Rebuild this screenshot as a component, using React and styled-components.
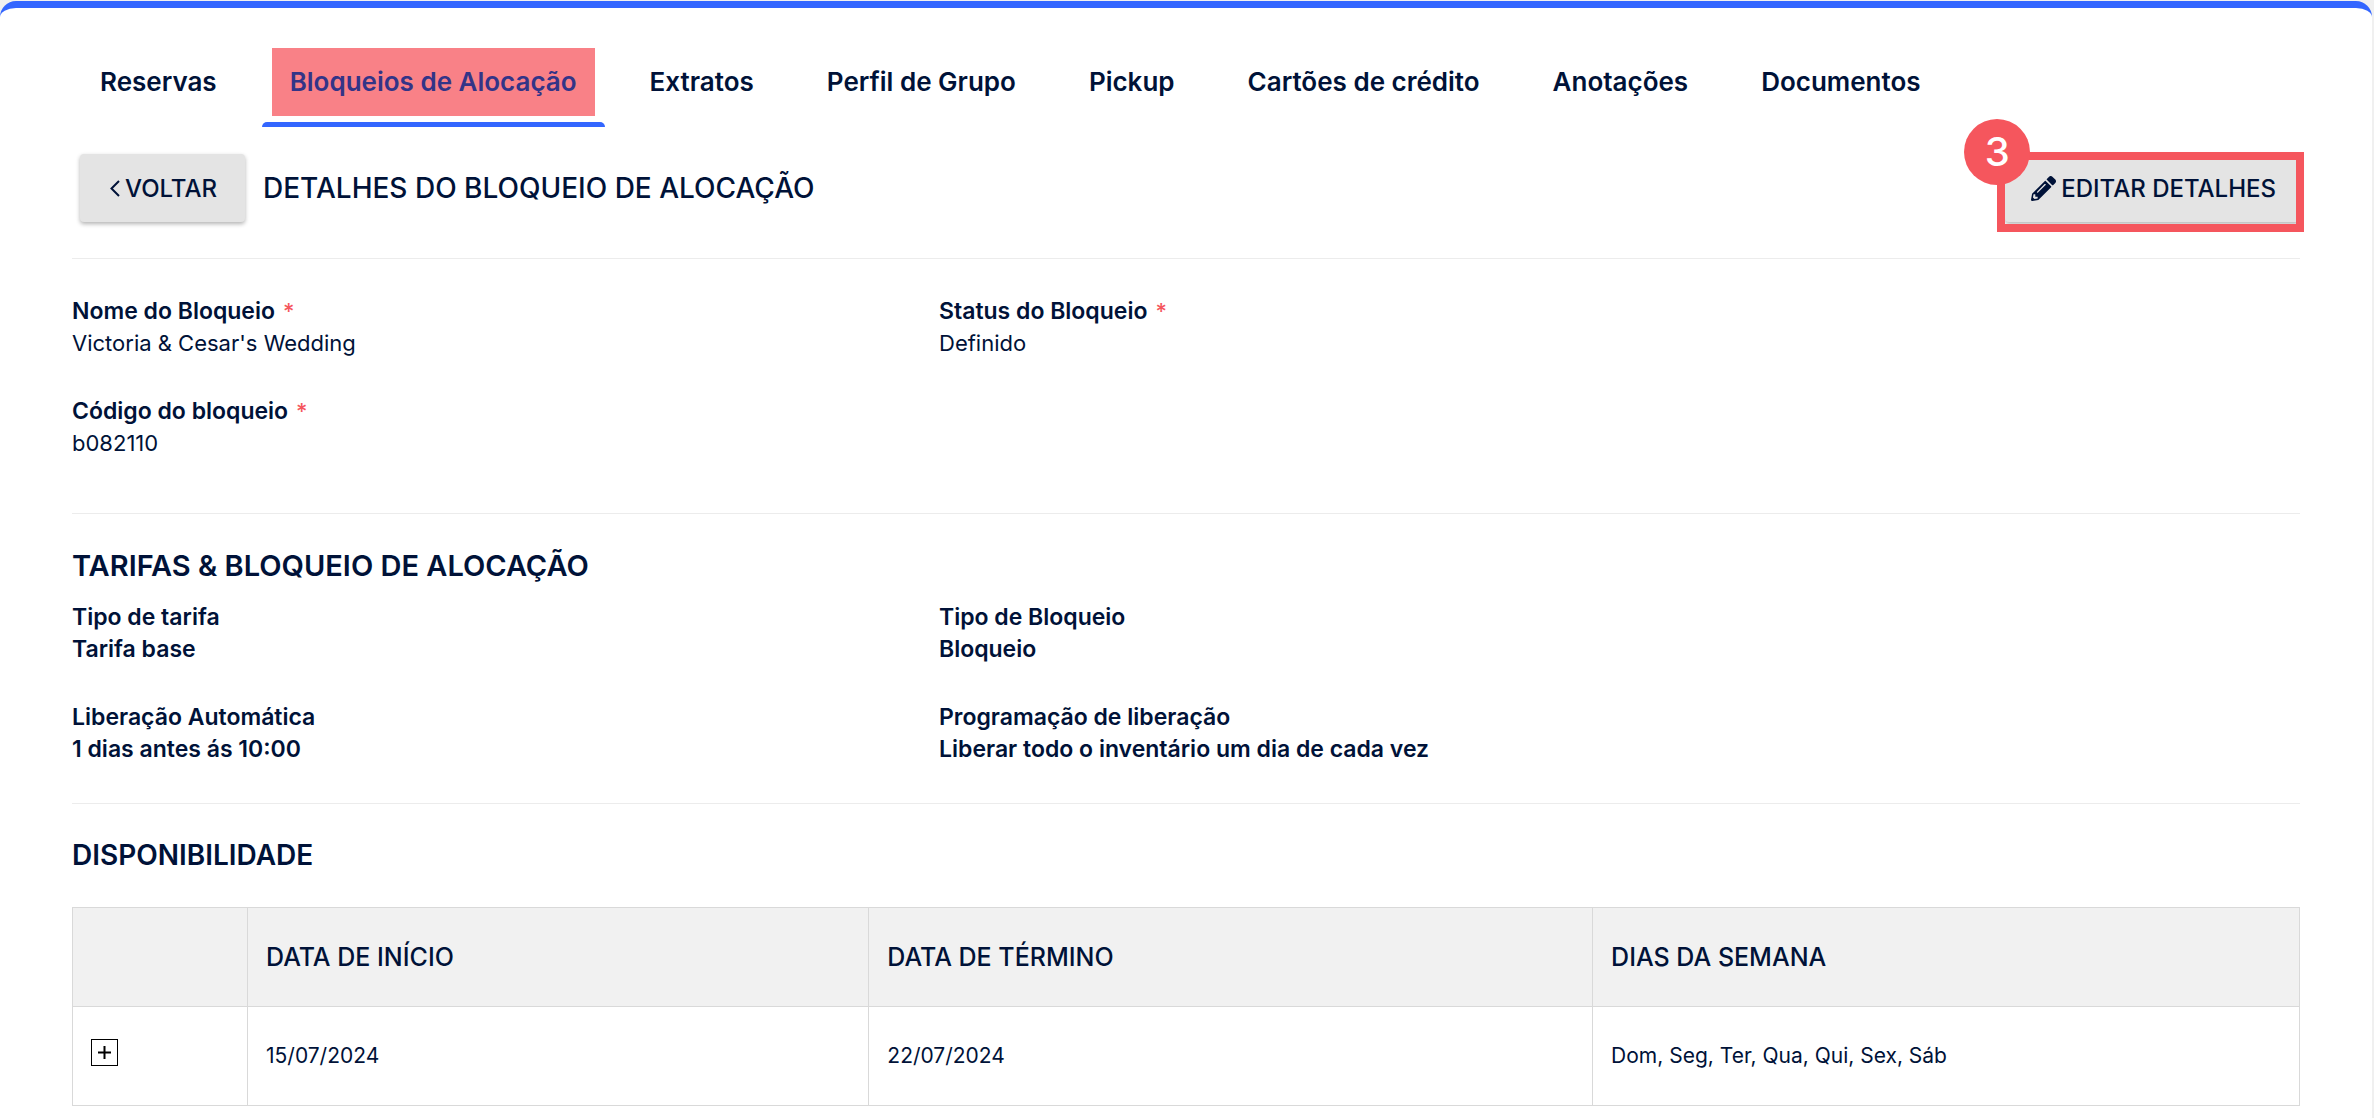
import React from 'react';
import styled, { createGlobalStyle } from 'styled-components';

const GlobalStyle = createGlobalStyle`
  * {
    box-sizing: border-box;
  }
  body {
    margin: 0;
    background-color: #f0f0f0;
    color: #001238;
    font-family: Inter, 'Open Sans', sans-serif;
    font-size: 22px;
    line-height: 32px;
  }
`

const Panel = styled.main`
  margin: 1px 2px 0 0;
  padding: 40px 72px 12px;
  min-height: calc(100vh - 1px);
  border-top: 7px solid #3366ff;
  border-radius: 16px 16px 0 0;
  background-color: #fff;
`

const Tabs = styled.nav`
  display: flex;
  gap: 17px;
`

const TabLink = styled.a`
  padding: 0 10px;
  color: ${p => p.$active ? '#333487' : '#001238'};
  font-size: 26px;
  font-weight: 600;
  line-height: 68px;
  text-decoration: none;
  white-space: nowrap;
  span {
    display: block;
    padding: 0 18px;
    background-color: ${p => p.$active ? '#f98187' : 'transparent'};
  }
  &::after {
    content: '';
    display: block;
    height: 5px;
    margin: 6px -10px 0;
    border-radius: 5px 5px 0 0;
    background-color: ${p => p.$active ? '#3366ff' : 'transparent'};
  }
`

const Toolbar = styled.div`
  display: flex;
  align-items: center;
  margin-top: 27px;
  padding: 0 0 36px 8px;
  border-bottom: 1px solid #ececec;
  h1 {
    flex: 1;
    margin: 0 0 0 18px;
    font-size: 28px;
    font-weight: 500;
  }
`

const Button = styled.button`
  display: flex;
  align-items: center;
  gap: 5px;
  height: 68px;
  min-width: 165px;
  padding: 0 24px 0 26px;
  border: 0;
  border-radius: 4px;
  background-color: #e4e4e4;
  box-shadow: 0 2px 4px rgba(0, 0, 0, .3);
  color: #001238;
  font-family: inherit;
  font-size: 24px;
  font-weight: 500;
  white-space: nowrap;
  cursor: pointer;
`

const Callout = styled.div`
  position: relative;
  &::after {
    content: '';
    position: absolute;
    inset: -2px -4px -10px -8px;
    border: 8px solid #f5565d;
    pointer-events: none;
  }
`

const Step = styled.span`
  position: absolute;
  z-index: 1;
  top: -35px;
  left: -41px;
  width: 66px;
  border-radius: 50%;
  background-color: #f5565d;
  color: #fff;
  font-size: 40px;
  font-weight: 500;
  line-height: 66px;
  text-align: center;
`

const Section = styled.section`
  padding: ${p => p.$titled ? '34px 0 38px' : '36px 0 54px'};
  border-bottom: 1px solid #ececec;
`

const SectionTitle = styled.h2`
  margin: 0 0 17px;
  font-size: 29px;
  font-weight: 600;
  line-height: 36px;
`

const Fields = styled.dl`
  display: grid;
  grid-template-columns: 867px 1fr;
  row-gap: 36px;
  margin: 0;
  dt {
    font-size: 23px;
    font-weight: 600;
  }
  dd {
    margin: 0;
    font-size: ${p => p.$strong ? '23px' : '22px'};
    font-weight: ${p => p.$strong ? 600 : 400};
  }
`

const Required = styled.span`
  margin-left: 8px;
  color: #f5565d;
  font-size: 22px;
  font-weight: 500;
`

const Availability = styled.section`
  padding-top: 33px;
  ${SectionTitle} {
    font-size: 28px;
  }
`

const Table = styled.table`
  width: 100%;
  margin-top: 34px;
  border-collapse: collapse;
  table-layout: fixed;
  th, td {
    height: 99px;
    padding: 0 18px;
    border: 1px solid #d9d9d9;
    text-align: left;
  }
  th {
    background-color: #f1f1f1;
    font-size: 25px;
    font-weight: 500;
  }
  td {
    font-size: 21px;
  }
`

const Column = styled.col`
  width: ${p => p.$width};
`

const Expand = styled.button`
  display: flex;
  align-items: center;
  justify-content: center;
  width: 27px;
  height: 27px;
  margin-bottom: 8px;
  padding: 0;
  border: 1px solid #000;
  background-color: #fff;
  cursor: pointer;
`

const tabs = [
  'Reservas',
  'Bloqueios de Alocação',
  'Extratos',
  'Perfil de Grupo',
  'Pickup',
  'Cartões de crédito',
  'Anotações',
  'Documentos',
]

const Field = ({ label, required, children }) =>
  <div>
    <dt>{label}{required && <Required>*</Required>}</dt>
    <dd>{children}</dd>
  </div>

const ChevronIcon = () =>
  <svg width='14' height='18' viewBox='0 0 14 18' fill='none' stroke='currentColor' strokeWidth='2' aria-hidden='true'>
    <path d='M13 2 5.5 9.5 13 17' />
  </svg>

const PencilIcon = () =>
  <svg width='25' height='25' viewBox='0 0 512 512' fill='currentColor' aria-hidden='true'>
    <path d='M498 142l-46 46c-5 5-13 5-17 0L324 77c-5-5-5-12 0-17l46-46c19-19 49-19 68 0l60 60c19 19 19 49 0 68zM284 100L22 362 0 484c-3 16 12 30 28 28l122-22 262-262c5-5 5-13 0-17L301 100c-4-5-12-5-17 0zM124 340c-5-6-5-14 0-20l154-154c6-5 14-5 20 0s5 14 0 20L144 340c-6 5-14 5-20 0zm-36 84h48v36l-64 12-32-32 12-65h36v49z' />
  </svg>

export default function App() {
  return (
    <>
      <GlobalStyle />
      <Panel>
        <Tabs>
          {tabs.map(tab =>
            <TabLink key={tab} href='#' $active={tab === 'Bloqueios de Alocação'}>
              <span>{tab}</span>
            </TabLink>
          )}
        </Tabs>
        <Toolbar>
          <Button><ChevronIcon />VOLTAR</Button>
          <h1>DETALHES DO BLOQUEIO DE ALOCAÇÃO</h1>
          <Callout>
            <Button><PencilIcon />EDITAR DETALHES</Button>
            <Step>3</Step>
          </Callout>
        </Toolbar>
        <Section>
          <Fields>
            <Field label='Nome do Bloqueio' required>Victoria & Cesar's Wedding</Field>
            <Field label='Status do Bloqueio' required>Definido</Field>
            <Field label='Código do bloqueio' required>b082110</Field>
          </Fields>
        </Section>
        <Section $titled>
          <SectionTitle>TARIFAS & BLOQUEIO DE ALOCAÇÃO</SectionTitle>
          <Fields $strong>
            <Field label='Tipo de tarifa'>Tarifa base</Field>
            <Field label='Tipo de Bloqueio'>Bloqueio</Field>
            <Field label='Liberação Automática'>1 dias antes ás 10:00</Field>
            <Field label='Programação de liberação'>Liberar todo o inventário um dia de cada vez</Field>
          </Fields>
        </Section>
        <Availability>
          <SectionTitle>DISPONIBILIDADE</SectionTitle>
          <Table>
            <colgroup>
              <Column $width='175px' />
              <Column $width='27.9%' />
              <Column $width='32.5%' />
              <Column />
            </colgroup>
            <thead>
              <tr>
                <th />
                <th>DATA DE INÍCIO</th>
                <th>DATA DE TÉRMINO</th>
                <th>DIAS DA SEMANA</th>
              </tr>
            </thead>
            <tbody>
              <tr>
                <td>
                  <Expand aria-label='Expandir'>
                    <svg width='13' height='13' viewBox='0 0 13 13' stroke='#000' strokeWidth='2' aria-hidden='true'>
                      <path d='M6.5 0v13M0 6.5h13' />
                    </svg>
                  </Expand>
                </td>
                <td>15/07/2024</td>
                <td>22/07/2024</td>
                <td>Dom, Seg, Ter, Qua, Qui, Sex, Sáb</td>
              </tr>
            </tbody>
          </Table>
        </Availability>
      </Panel>
    </>
  )
}
